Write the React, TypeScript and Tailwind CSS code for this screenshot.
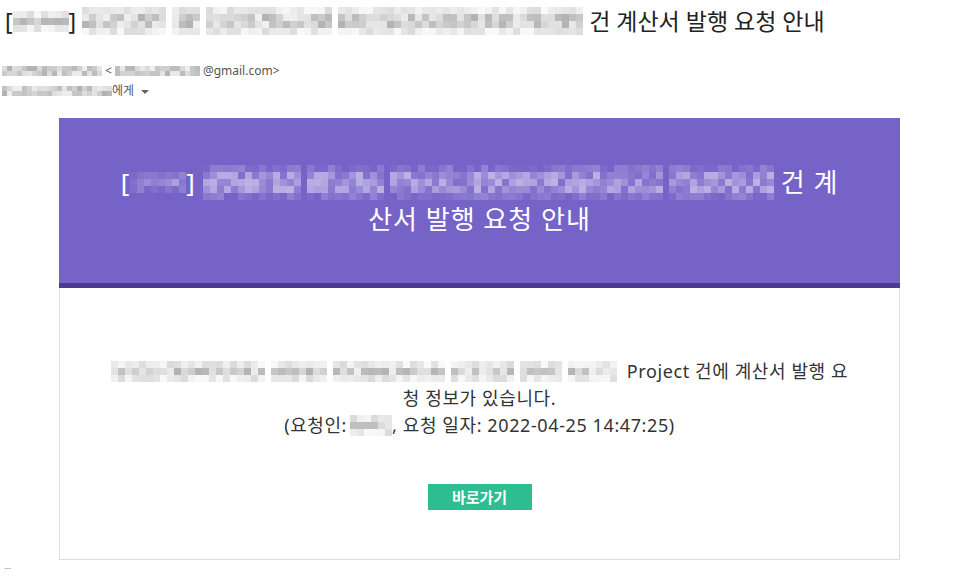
import clsx from "clsx";

const FONT = "font-['Noto_Sans','Noto_Sans_CJK_KR',sans-serif]";

interface MosaicProps {
  w: number;
  h: number;
  cell?: number;
  seed?: number;
  purple?: boolean;
  className?: string;
}

// pixelated (blurred-out) text block
function Mosaic({ w, h, cell = 7, seed = 1, purple = false, className }: MosaicProps) {
  const cols = Math.max(1, Math.round(w / cell));
  const rows = Math.max(1, Math.round(h / cell));
  let s = seed * 7919;
  const rnd = () => {
    s = (s * 9301 + 49297) % 233280;
    return s / 233280;
  };
  const cells = [];
  for (let i = 0; i < cols * rows; i++) {
    const r = rnd();
    const row = Math.floor(i / cols);
    const edge = rows > 2 && (row === 0 || row === rows - 1);
    const k = edge ? r * 0.3 : 0.1 + r * 0.6;
    let color: string;
    if (purple) {
      const mix = (a: number, b: number) => Math.round(a + (b - a) * k);
      color = `rgb(${mix(117, 218)}, ${mix(99, 212)}, ${mix(199, 242)})`;
    } else {
      const v = Math.round(250 - k * 105);
      color = `rgb(${v}, ${v}, ${v})`;
    }
    cells.push(<span key={i} style={{ backgroundColor: color }} />);
  }
  return (
    <span
      className={clsx("inline-grid shrink-0 align-middle", className)}
      style={{
        gridTemplateColumns: `repeat(${cols}, ${cell}px)`,
        gridAutoRows: `${cell}px`,
      }}
    >
      {cells}
    </span>
  );
}

function MosaicRun({
  parts,
  h,
  cell = 7,
  seed = 1,
  purple = false,
}: {
  parts: number[];
  h: number;
  cell?: number;
  seed?: number;
  purple?: boolean;
}) {
  return (
    <span className="inline-flex items-center gap-[6px]">
      {parts.map((w, i) => (
        <Mosaic key={i} w={w} h={h} cell={cell} seed={seed + i * 13} purple={purple} />
      ))}
    </span>
  );
}

export default function App() {
  return (
    <div className={clsx("min-h-[583px] bg-white text-[#222]", FONT)}>
      <h1 className="flex items-center gap-[6px] pl-[5px] pt-[5px] text-[23px] font-normal leading-[32px] text-[#222]">
        <span className="flex items-center">
          [<Mosaic w={56} h={21} seed={3} />]
        </span>
        <MosaicRun parts={[84, 28, 126, 245]} h={28} seed={5} />
        <span>건 계산서 발행 요청 안내</span>
      </h1>

      <div className="mt-[25px] space-y-[3px] pl-[2px] text-[12px] leading-[17px] text-[#555]">
        <div className="flex items-center gap-[3px]">
          <Mosaic w={98} h={10} cell={5} seed={11} />
          <span>&lt;</span>
          <Mosaic w={85} h={10} cell={5} seed={13} />
          <span>@gmail.com&gt;</span>
        </div>
        <div className="flex items-center">
          <Mosaic w={110} h={10} cell={5} seed={17} />
          <span>에게</span>
          <span className="ml-[7px] mt-[2px] border-x-[4px] border-t-[4px] border-x-transparent border-t-[#666]" />
        </div>
      </div>

      <div className="ml-[59px] mt-[19px] w-[841px]">
        <div className="flex h-[165px] flex-col items-center justify-center bg-[#7563c7] text-[26px] font-normal leading-[37px] tracking-[1px] text-white">
          <div className="flex items-center gap-[7px]">
            <span className="flex items-center">
              [<Mosaic w={56} h={21} seed={19} purple />]
            </span>
            <MosaicRun parts={[98, 77, 273, 105]} h={35} seed={23} purple />
            <span>건 계</span>
          </div>
          <div>산서 발행 요청 안내</div>
        </div>
        <div className="h-[5px] bg-[#4a3a93]" />
        <div className="flex flex-col items-center border-x border-b border-[#dcdcdc] pb-[49px] pt-[70px] text-[18px] leading-[27px] tracking-[0.6px] text-[#333]">
          <div className="flex items-center gap-[10px]">
            <MosaicRun parts={[156, 56, 110, 63, 42, 47]} h={21} seed={29} />
            <span>Project 건에 계산서 발행 요</span>
          </div>
          <div>청 정보가 있습니다.</div>
          <div className="flex items-center">
            <span>(요청인:</span>
            <Mosaic w={42} h={21} seed={31} className="ml-[3px]" />
            <span>, 요청 일자: 2022-04-25 14:47:25)</span>
          </div>
          <a className="mt-[45px] flex h-[26px] w-[104px] items-center justify-center bg-[#2ebd90] text-[15px] font-bold tracking-normal text-white">
            바로가기
          </a>
        </div>
      </div>

      <div className="pl-[4px] pt-[1px] text-[9px] leading-[10px] text-[#777]">...</div>
    </div>
  );
}
